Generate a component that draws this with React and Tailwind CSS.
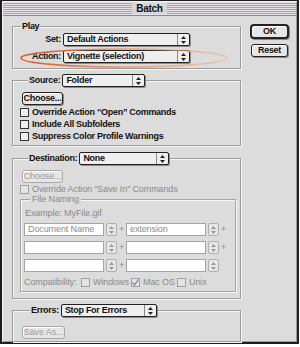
import React from 'react';

const bold = "font-['Liberation_Sans',Arial,sans-serif] font-bold text-[9px] tracking-[-0.3px] text-[#111] leading-none";
const thin = "font-['Liberation_Sans',Arial,sans-serif] text-[9px] tracking-[-0.1px] text-[#8a8a8a] leading-none";

function Arrows({ dim }) {
  const c = dim ? '#9a9a9a' : '#222';
  return (
    <svg width="5" height="8" viewBox="0 0 5 8">
      <path d="M2.5 0 L5 3 L0 3 Z" fill={c} />
      <path d="M0 5 L5 5 L2.5 8 Z" fill={c} />
    </svg>
  );
}

function Popup({ w, children }) {
  return (
    <div className={`${w} h-[13px] flex items-stretch bg-[#efefef] border border-[#222] rounded-[2px] shadow-[1px_1px_0_#8a8a8a]`}>
      <span className={`${bold} flex-1 flex items-center pl-[3px] whitespace-nowrap`}>{children}</span>
      <span className="w-[12px] border-l border-[#888] flex items-center justify-center">
        <Arrows />
      </span>
    </div>
  );
}

function Button({ children, w = 'w-[41px]', off }) {
  return (
    <div
      className={`${w} h-[13px] flex items-center justify-center rounded-[3px] border bg-[#e6e6e6] ${
        off ? 'border-[#a8a8a8] shadow-[inset_1px_1px_0_#fff]' : 'border-[#222] shadow-[inset_1px_1px_0_#fff,1px_1px_0_#888]'
      }`}
    >
      <span className={off ? `${thin} text-[#9a9a9a]` : bold}>{children}</span>
    </div>
  );
}

function Check({ label, off, checked }) {
  return (
    <div className="h-[12px] flex items-center gap-[3px]">
      <span
        className={`w-[9px] h-[9px] border flex items-center justify-center ${
          off ? 'border-[#a0a0a0] bg-[#e4e4e4]' : 'border-[#333] bg-[#eeeeee]'
        }`}
      >
        {checked && (
          <svg width="7" height="7" viewBox="0 0 7 7">
            <path d="M0.5 3.5 L2.5 6 L6.5 0.5" fill="none" stroke="#7a7a7a" strokeWidth="1.2" />
          </svg>
        )}
      </span>
      <span className={`${off ? thin : bold} whitespace-nowrap`}>{label}</span>
    </div>
  );
}

function Group({ header, className = '', children }) {
  return (
    <div className={`relative border border-[#9c9c9c] shadow-[inset_1px_1px_0_#f6f6f6,1px_1px_0_#f6f6f6] ${className}`}>
      <div className="-mt-[7px] h-[13px] flex pl-[8px]">
        <div className="flex items-center gap-[2px] bg-[#dcdcdc] px-[1px]">{header}</div>
      </div>
      {children}
    </div>
  );
}

function Field({ text }) {
  return (
    <div className="w-[80px] h-[13px] bg-white border border-[#a4a4a4] flex items-center pl-[3px]">
      <span className={`${thin} whitespace-nowrap`}>{text}</span>
    </div>
  );
}

function Stepper() {
  return (
    <div className="w-[11px] h-[13px] border border-[#b0b0b0] bg-[#e6e6e6] rounded-[2px] flex items-center justify-center">
      <Arrows dim />
    </div>
  );
}

function NameRow({ a, b, last }) {
  return (
    <div className="h-[13px] flex items-center">
      <Field text={a} />
      <div className="ml-[2px]"><Stepper /></div>
      <span className={`${thin} w-[9px] text-center`}>+</span>
      <Field text={b} />
      <div className="ml-[2px]"><Stepper /></div>
      {!last && <span className={`${thin} w-[9px] text-center`}>+</span>}
    </div>
  );
}

export default function App() {
  return (
    <div className="w-[300px] h-[347px] bg-white overflow-hidden">
      <div className="w-[299px] h-[344px] border border-[#1e1e1e] border-l-2 border-r-2 border-b-2 bg-[#dcdcdc] shadow-[inset_1px_1px_0_#f2f2f2,inset_-1px_-1px_0_#9a9a9a] flex flex-col">
        <div className="h-[14px] mx-[1px] mt-[1px] flex items-center bg-[repeating-linear-gradient(to_bottom,#e4e2e4_0px,#e4e2e4_1px,#a8a4aa_1px,#a8a4aa_2px)] border-b border-[#8a8a8a]">
          <div className="flex-1" />
          <span className={`${bold} bg-[#d8d6d8] px-[4px] h-[11px] flex items-center text-[10px]`}>Batch</span>
          <div className="flex-1" />
        </div>

        <div className="flex">
          <div className="ml-[10px] w-[229px] flex flex-col">
            <div className="relative mt-[10px]">
              <Group header={<span className={bold}>Play</span>} className="pb-[5px]">
                <div className="flex items-center gap-[2px]">
                  <span className={`${bold} w-[48px] text-right`}>Set:</span>
                  <Popup w="w-[127px]">Default Actions</Popup>
                </div>
                <div className="flex items-center gap-[2px] mt-[4px]">
                  <span className={`${bold} w-[48px] text-right`}>Action:</span>
                  <Popup w="w-[127px]">Vignette (selection)</Popup>
                </div>
              </Group>
              <svg className="absolute left-[7px] top-[21px] pointer-events-none" width="210" height="22" viewBox="0 0 210 22">
                <defs>
                  <linearGradient id="ring" x1="0" y1="0" x2="1" y2="0">
                    <stop offset="0" stopColor="#e0521e" />
                    <stop offset="0.45" stopColor="#e98a55" stopOpacity="0.8" />
                    <stop offset="1" stopColor="#f2b48c" stopOpacity="0.6" />
                  </linearGradient>
                </defs>
                <ellipse cx="105" cy="11" rx="103" ry="9" fill="none" stroke="url(#ring)" strokeWidth="1.6" />
              </svg>
            </div>

            <Group
              className="mt-[11px] pl-[7px] pb-[3px]"
              header={
                <>
                  <span className={bold}>Source:</span>
                  <Popup w="w-[83px]">Folder</Popup>
                </>
              }
            >
              <div className="mt-[5px] ml-[2px]">
                <Button>Choose...</Button>
              </div>
              <div className="mt-[1px]">
                <Check label={'Override Action \u201COpen\u201D Commands'} />
                <Check label="Include All Subfolders" />
                <Check label="Suppress Color Profile Warnings" />
              </div>
            </Group>

            <Group
              className="mt-[12px] pl-[7px] pr-[4px] pb-[6px]"
              header={
                <>
                  <span className={bold}>Destination:</span>
                  <Popup w="w-[90px]">None</Popup>
                </>
              }
            >
              <div className="mt-[5px] ml-[2px]">
                <Button off>Choose...</Button>
              </div>
              <Check off label={'Override Action \u201CSave In\u201D Commands'} />
              <div className="mt-[4px] relative border border-[#a6a6a6] shadow-[inset_1px_1px_0_#f6f6f6,1px_1px_0_#f6f6f6] pl-[3px] pb-[3px]">
                <div className="-mt-[6px] h-[11px] flex pl-[6px]">
                  <span className={`${thin} bg-[#dcdcdc] px-[2px] flex items-center`}>File Naming</span>
                </div>
                <div className={`${thin} h-[12px] mt-[2px] flex items-center pl-[1px]`}>Example: MyFile.gif</div>
                <div className="mt-[4px] flex flex-col gap-[5px]">
                  <NameRow a="Document Name" b="extension" />
                  <NameRow a="" b="" />
                  <NameRow a="" b="" last />
                </div>
                <div className="mt-[4px] h-[12px] flex items-center">
                  <span className={`${thin} w-[57px]`}>Compatibility:</span>
                  <div className="w-[50px]"><Check off label="Windows" /></div>
                  <div className="w-[46px]"><Check off checked label="Mac OS" /></div>
                  <Check off label="Unix" />
                </div>
              </div>
            </Group>

            <Group
              className="mt-[11px] pl-[9px] pb-[2px]"
              header={
                <>
                  <span className={bold}>Errors:</span>
                  <Popup w="w-[96px]">Stop For Errors</Popup>
                </>
              }
            >
              <div className="mt-[9px]">
                <Button w="w-[43px]" off>Save As...</Button>
              </div>
            </Group>
          </div>

          <div className="ml-[9px] mt-[8px] flex flex-col">
            <div className="w-[39px] h-[15px] border-2 border-[#222] rounded-[4px] bg-[#e6e6e6] flex items-center justify-center shadow-[inset_1px_1px_0_#fff,1px_1px_0_#888]">
              <span className={bold}>OK</span>
            </div>
            <div className="mt-[5px] ml-[1px]">
              <Button w="w-[37px]">Reset</Button>
            </div>
          </div>
        </div>
      </div>
    </div>
  );
}
